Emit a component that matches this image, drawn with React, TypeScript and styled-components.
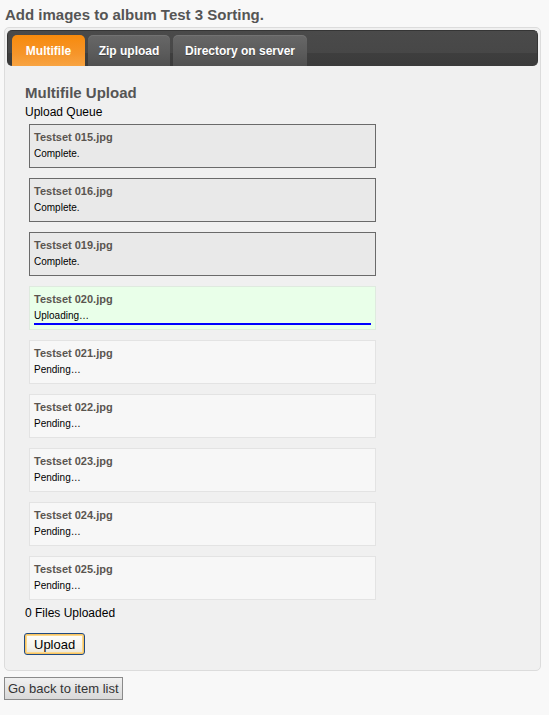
import React from "react";
import styled, { createGlobalStyle } from "styled-components";

const GlobalStyle = createGlobalStyle`
  html, body { margin: 0; padding: 0; background: #f8f8f8; }
  body { font-family: "Liberation Sans", Arial, sans-serif; color: #000; }
`;

const Page = styled.div`
  padding: 0 4px;
  width: 537px;
`;

const Title = styled.h1`
  margin: 6px 0 4px 1px;
  font-size: 15px;
  line-height: 17px;
  font-weight: bold;
  color: #555;
`;

const Panel = styled.div`
  box-sizing: border-box;
  width: 537px;
  background: #f0f0f0;
  border: 1px solid #dcdcdc;
  border-radius: 5px;
  padding: 2px 2px 15px;
`;

const TabBar = styled.div`
  display: flex;
  gap: 3px;
  height: 36px;
  box-sizing: border-box;
  padding: 4px 4px 0;
  border-radius: 5px;
  background: linear-gradient(#4a4a4a 0%, #474747 62%, #3e3e3e 64%, #3b3b3b 100%);
  border: 1px solid #353535;
  border-bottom: none;
`;

const Tab = styled.div<{ $active?: boolean; $w: number }>`
  width: ${(p) => p.$w}px;
  height: 31px;
  display: flex;
  align-items: center;
  justify-content: center;
  border-radius: 5px 5px 0 0;
  font-size: 12px;
  font-weight: bold;
  color: #fff;
  background: ${(p) =>
    p.$active
      ? "linear-gradient(#f78a0c, #f6952a 60%, #f8a442)"
      : "linear-gradient(#676767, #5c5c5c 55%, #505050)"};
  box-shadow: ${(p) => (p.$active ? "none" : "inset 0 1px 0 rgba(255,255,255,0.08)")};
  text-shadow: ${(p) => (p.$active ? "none" : "0 1px 0 rgba(0,0,0,0.3)")};
`;

const Content = styled.div`
  padding: 18px 0 0 18px;
`;

const SectionTitle = styled.h2`
  margin: 0 0 3px;
  font-size: 15px;
  line-height: 18px;
  font-weight: bold;
  color: #555;
`;

const Label = styled.div`
  font-size: 12px;
  line-height: 14px;
  color: #000;
`;

const Queue = styled.div`
  display: flex;
  flex-direction: column;
  gap: 10px;
  margin: 5px 0 6px 4px;
  width: 347px;
`;

type State = "complete" | "uploading" | "pending";

const Item = styled.div<{ $state: State }>`
  box-sizing: border-box;
  height: 44px;
  padding: 5px 4px 0;
  border: 1px solid
    ${(p) => (p.$state === "complete" ? "#6a6a6a" : p.$state === "uploading" ? "#dfeadf" : "#e3e3e3")};
  background: ${(p) =>
    p.$state === "complete" ? "#e9e9e9" : p.$state === "uploading" ? "#e9ffe9" : "#f7f7f7"};
`;

const FileName = styled.div`
  font-size: 11px;
  line-height: 14px;
  font-weight: bold;
  color: #5a5550;
`;

const Status = styled.div`
  margin-top: 3px;
  font-size: 10px;
  line-height: 13px;
  color: #000;
`;

const Progress = styled.div`
  margin-top: 1px;
  height: 2px;
  background: #0000ff;
`;

const UploadButton = styled.button`
  margin: 13px 0 0 -1px;
  box-sizing: border-box;
  height: 22px;
  padding: 0 9px;
  font-family: "Liberation Sans", Arial, sans-serif;
  font-size: 13px;
  color: #000;
  border: 1px solid #1f4a82;
  border-radius: 3px;
  background: linear-gradient(#fffefb, #f4f2ea 70%, #e6e3d6);
  box-shadow: inset 0 0 0 1px #f9c461, inset 0 0 0 2px #fbd98e;
`;

const BackButton = styled.button`
  margin-top: 6px;
  box-sizing: border-box;
  height: 23px;
  padding: 0 3px;
  font-family: "Liberation Sans", Arial, sans-serif;
  font-size: 13px;
  color: #333;
  border: 1px solid #8a8a8a;
  border-radius: 0;
  background: linear-gradient(#f0f0f0, #e4e4e4 50%, #d9d9d9);
`;

const files: { name: string; state: State }[] = [
  { name: "Testset 015.jpg", state: "complete" },
  { name: "Testset 016.jpg", state: "complete" },
  { name: "Testset 019.jpg", state: "complete" },
  { name: "Testset 020.jpg", state: "uploading" },
  { name: "Testset 021.jpg", state: "pending" },
  { name: "Testset 022.jpg", state: "pending" },
  { name: "Testset 023.jpg", state: "pending" },
  { name: "Testset 024.jpg", state: "pending" },
  { name: "Testset 025.jpg", state: "pending" },
];

const statusText: Record<State, string> = {
  complete: "Complete.",
  uploading: "Uploading…",
  pending: "Pending…",
};

export default function App() {
  return (
    <>
      <GlobalStyle />
      <Page>
        <Title>Add images to album Test 3 Sorting.</Title>
        <Panel>
          <TabBar>
            <Tab $active $w={73}>Multifile</Tab>
            <Tab $w={82}>Zip upload</Tab>
            <Tab $w={134}>Directory on server</Tab>
          </TabBar>
          <Content>
            <SectionTitle>Multifile Upload</SectionTitle>
            <Label>Upload Queue</Label>
            <Queue>
              {files.map((f) => (
                <Item key={f.name} $state={f.state}>
                  <FileName>{f.name}</FileName>
                  <Status>{statusText[f.state]}</Status>
                  {f.state === "uploading" && <Progress />}
                </Item>
              ))}
            </Queue>
            <Label>0 Files Uploaded</Label>
            <UploadButton>Upload</UploadButton>
          </Content>
        </Panel>
        <BackButton>Go back to item list</BackButton>
      </Page>
    </>
  );
}
